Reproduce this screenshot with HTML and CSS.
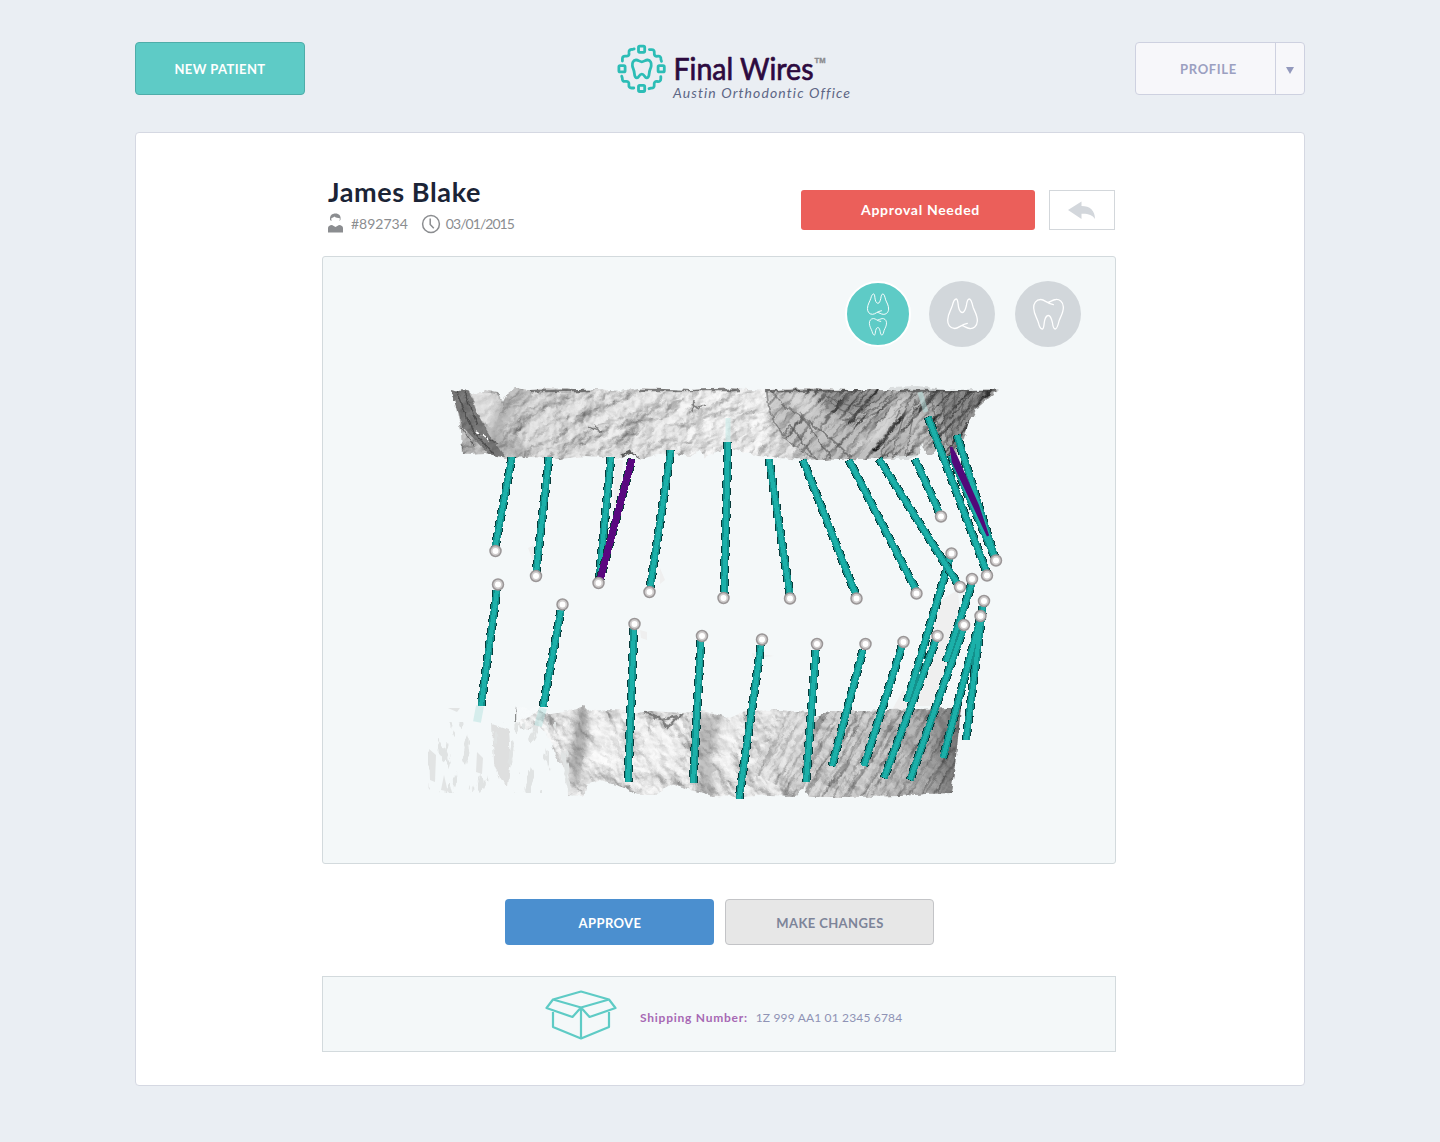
FILE: index.html
```html
<!DOCTYPE html>
<html lang="en">
<head>
<meta charset="utf-8">
<title>Final Wires</title>
<link rel="stylesheet" href="styles.css">
</head>
<body>
<div class="page">
  <header class="header">
    <button class="btn btn-new"><span>NEW PATIENT</span></button>
    <svg class="logo" viewBox="610 40 250 64" width="250" height="64">
      <g class="logo-mark" transform="translate(641.6 68.8)">
        <defs>
          <g id="quarter">
            <rect x="-3.1" y="-22.7" width="6.2" height="6.2" rx="1.2"/>
            <path d="M7.8-19.200H10c2 0 2.900 1.200 2.700 3.200-.4 2.600.9 3.800 3.600 3.400 2.200-.2 3.200 1 3 3.200l.6 2"/>
          </g>
        </defs>
        <use href="#quarter"/>
        <use href="#quarter" transform="rotate(90)"/>
        <use href="#quarter" transform="rotate(180)"/>
        <use href="#quarter" transform="rotate(270)"/>
        <path d="M.2-7C-2-7-3.4-9-5.6-8.8-8.4-8.6-9.6-5.8-9.2-3-8.9-.6-7.6 1-7.3 4-7.1 6.6-6.3 9-4.6 9-2.6 9-2.6 5.4.2 5.4S3 9 5 9C6.700 9 7.500 6.600 7.700 4 8 1 9.300-.6 9.600-3 10-5.800 8.800-8.600 6-8.800 3.800-9 2.400-7 .2-7Z"/>
      </g>
      <text class="logo-name" x="673.500" y="80" textLength="140" lengthAdjust="spacingAndGlyphs">Final Wires</text>
      <text class="logo-tm" x="814.500" y="63" textLength="11" lengthAdjust="spacingAndGlyphs">TM</text>
      <text class="logo-sub" x="673" y="98" textLength="177">Austin Orthodontic Office</text>
    </svg>
    <div class="profile">
      <button class="profile-main"><span>PROFILE</span></button>
      <button class="profile-toggle" aria-label="Open menu"><svg width="8" height="7" viewBox="0 0 8 7"><path d="M0 0H8L4 7Z" fill="#9399bd"/></svg></button>
    </div>
  </header>

  <main class="card">
    <section class="patient">
      <div class="patient-info">
        <h1>James Blake</h1>
        <div class="meta">
          <svg width="17" height="20" viewBox="0 0 17 20">
            <path fill="#8b8d90" d="M1 19.500V15c0-2 1.600-2.600 4-3l3.500 2 3.500-2c2.400.4 4 1 4 3v4.500Z"/>
            <path fill="#8b8d90" d="M3 6.500C2.600 2.500 5 .5 8.500.5S14 2.800 13.500 6.500L12.700 8H4Z"/>
            <path fill="#fff" d="M4.300 5.200C6 5 6.600 4 7.200 3.600 8.500 5 11 5.200 12.800 5.200 13 9 11 12.500 8.500 12.500S4.100 9 4.300 5.200Z"/>
          </svg>
          <span class="meta-id">#892734</span>
          <svg class="clock" width="20" height="20" viewBox="0 0 20 20" fill="none" stroke="#8b8d90" stroke-width="1.500"><circle cx="10" cy="10" r="8.400"/><path d="M9.200 4.500V10.500L12.800 14.300"/></svg>
          <span class="meta-date">03/01/2015</span>
        </div>
      </div>
      <div class="patient-actions">
        <div class="status"><span>Approval Needed</span></div>
        <button class="back" aria-label="Back"><svg width="28" height="20" viewBox="0 0 28 20"><path fill="#d3d7dc" d="M0 10 13.500 1.500V6C22 6 27 10.500 27 19 24.500 15 20 13.500 13.500 13.800V19Z"/></svg></button>
      </div>
    </section>

    <section class="viewer">
      <svg class="model" viewBox="323 257 792 606" width="792" height="606">
        <defs>
          <filter id="bumps" x="0" y="0" width="100%" height="100%" color-interpolation-filters="sRGB">
            <feTurbulence type="fractalNoise" baseFrequency=".035 .05" numOctaves="4" seed="7"/>
            <feColorMatrix values="0 0 0 0 0 0 0 0 0 0 0 0 0 0 0 1 0 0 0 0"/>
            <feDiffuseLighting surfaceScale="5" diffuseConstant="1.050" lighting-color="#ededed"><feDistantLight azimuth="235" elevation="62"/></feDiffuseLighting>
            <feGaussianBlur stdDeviation=".6"/>
          </filter>
          <filter id="grooves" x="0" y="0" width="100%" height="100%" color-interpolation-filters="sRGB">
            <feTurbulence type="fractalNoise" baseFrequency=".02 .16" numOctaves="4" seed="12"/>
            <feColorMatrix values="0 0 0 0 0 0 0 0 0 0 0 0 0 0 0 1 0 0 0 0"/>
            <feDiffuseLighting surfaceScale="5" diffuseConstant="1" lighting-color="#cecece"><feDistantLight azimuth="250" elevation="60"/></feDiffuseLighting>
            <feGaussianBlur stdDeviation=".4"/>
          </filter>
          <filter id="ragged" x="-2%" y="-5%" width="104%" height="110%">
            <feTurbulence type="fractalNoise" baseFrequency=".16" numOctaves="2" seed="3" result="n"/>
            <feDisplacementMap in="SourceGraphic" in2="n" scale="5" xChannelSelector="R" yChannelSelector="G"/>
          </filter>
          <filter id="soft"><feGaussianBlur stdDeviation="3"/></filter>
          <filter id="flakes" x="0" y="0" width="100%" height="100%" color-interpolation-filters="sRGB">
            <feTurbulence type="fractalNoise" baseFrequency=".11 .035" numOctaves="4" seed="21"/>
            <feColorMatrix values="0 0 0 0 .88 0 0 0 0 .89 0 0 0 0 .89 22 0 0 0 -13.600"/>
          </filter>
          <linearGradient id="upperTone" x1="452" x2="998" y1="0" y2="0" gradientUnits="userSpaceOnUse">
            <stop offset="0" stop-color="#666" stop-opacity=".4"/><stop offset=".1" stop-color="#888" stop-opacity=".2"/>
            <stop offset=".3" stop-color="#aaa" stop-opacity=".1"/><stop offset=".45" stop-color="#fff" stop-opacity=".3"/>
            <stop offset=".57" stop-color="#fff" stop-opacity=".25"/><stop offset=".62" stop-color="#777" stop-opacity=".1"/>
            <stop offset="1" stop-color="#555" stop-opacity=".25"/>
          </linearGradient>
          <linearGradient id="lowerTone" x1="560" x2="962" y1="0" y2="0" gradientUnits="userSpaceOnUse">
            <stop offset="0" stop-color="#fff" stop-opacity=".25"/><stop offset=".5" stop-color="#eee" stop-opacity=".2"/>
            <stop offset=".75" stop-color="#bbb" stop-opacity=".2"/><stop offset=".9" stop-color="#777" stop-opacity=".4"/><stop offset="1" stop-color="#333" stop-opacity=".65"/>
          </linearGradient>
          <clipPath id="upperArch">
            <path d="M452 390 459 392 463 389 470 391 476 396 484 389 498 392 503 402 507 394 515 388 530 390 548 388 575 390 598 389 620 391 640 388 690 390 730 388 768 390 806 388 850 390 888 390 890 387 918 386 945 390 999 389 988 398 977 409 968 424 964 440 958 444 955 458 945 457 940 445 932 455 926 455 921 442 918 455 910 459 860 459 820 460 790 459 758 456 738 450 728 446 716 452 705 458 700 450 690 457 670 452 640 459 630 453 620 458 585 456 560 459 530 457 505 458 485 453 462 454 461 430Z"/>
          </clipPath>
          <clipPath id="lowerArch">
            <path d="M516 706 530 710 538 706 545 715 570 711 584 706 590 711 618 710 632 714 650 711 682 713 700 711 714 713 730 718 745 711 778 710 806 712 816 717 830 711 860 711 950 708 961 706 958 738 955 765 951 793 925 794 900 796 850 797 808 797 804 786 796 796 770 795 745 797 712 796 700 792 690 790 672 783 655 795 640 795 625 788 600 780 588 783 584 796 568 795 567 770 556 758 550 738 538 725 522 730 514 720Z"/>
          </clipPath>
          <clipPath id="palate"><path d="M766 390H999L976 409 964 440 955 458 925 456 918 455 820 462C790 445 766 430 766 390Z"/></clipPath>
          <path id="upperRods" d="M512 457 495 548M549 457 536 573M611 457 599 580M671 450 650 588M728 442 724 595M769 459 790 595M803 460 856 595M849 460 916 590M879 459 959 586M915 459 940 514M957 435 995 558M951 455 995 558M928 417 987 573"/>
          <path id="lowerRods" d="M950 558 907 702M972 583 946 662M497 590 481 706M561 610 543 707M634 628 628 782M701 640 693 783M761 645 739 799M816 650 806 782M863 650 832 766M902 646 864 766M936 640 884 778M963 630 910 780M983 606 966 740M980 620 943 758"/>
          <path id="purpleRod" d="M632 459 600 580"/>
          <path id="balls" d="M495.500 551h0M536 576h0M598.500 583h0M649.500 592h0M723.500 598h0M790 598.500h0M856.500 598.500h0M916.500 593.500h0M960 587h0M941 516.500h0M987 575.500h0M996 560.500h0M498 584.500h0M562.500 604.500h0M634.500 624h0M702 636h0M762 639.500h0M817 644h0M865.500 644h0M903.500 642h0M937.500 636h0M964 625h0M980.500 616h0M984 601h0M972 579h0M951.500 553.500h0"/>
        </defs>

        <!-- faint scan residue behind the rods -->
        <g fill="#efefef">
          <path d="M937 602 958 590 962 640 938 706 915 706Z M892 710 903 690 915 710Z"/>
          <path d="M615 460h8l-3 40-6 8Z M528 548l6-3v18Z M660 568l5 12-5 4Z M752 653l22 3-21 2Z M640 630l7 2v8l-6-2Z M834 550l8-4-4 15Z"/>
        </g>

        <!-- upper arch -->
        <g filter="url(#ragged)"><g clip-path="url(#upperArch)">
          <g transform="rotate(-25 600 420)"><rect x="420" y="230" width="430" height="400" filter="url(#bumps)"/></g>
          <g clip-path="url(#palate)">
            <g transform="rotate(-48 870 420)"><rect x="740" y="280" width="280" height="280" filter="url(#grooves)"/></g>
            <path d="M764 385 810 395 868 440 880 462H800L768 430Z" fill="#d6d6d6" opacity=".45"/>
            <path d="M770 388C786 416 806 412 852 458M767 392C769 428 793 450 818 460M800 412 818 440 832 458M780 440 790 425 812 455" fill="none" stroke="#555" stroke-width="1.600" opacity=".65"/>
            <g filter="url(#soft)">
              <path d="M905 395 872 430 850 452 880 440 908 400Z" fill="#fff" opacity=".7"/>
              <path d="M786 392 815 396 812 418 792 408Z" fill="#fff" opacity=".5"/>
              <path d="M820 390H890C880 404 850 420 826 412Z M930 388H996L966 424 954 450Z" fill="#444" opacity=".35"/>
              <path d="M912 415 925 415 930 455 905 455Z" fill="#fff" opacity=".4"/>
            </g>
            <path d="M825 394Q860 418 882 396M830 402Q858 428 890 396M842 420Q870 424 898 395M930 392 942 448M942 390 948 446M955 390 952 440M966 392 957 432M975 391 961 425M985 391 966 418M916 400 906 455M908 402 892 455M900 410 880 455" fill="none" stroke="#444" stroke-width="1.300" opacity=".5"/>
          </g>
          <rect x="440" y="380" width="570" height="90" fill="url(#upperTone)"/>
          <path d="M472 391 498 394 503 408 492 428 478 418Z" fill="#efefef" opacity=".65"/>
          <path d="M503 393 530 390 500 432 530 456H492L486 436Z" fill="#777" opacity=".35" filter="url(#soft)"/>
          <path d="M450 388 469 390C476 415 487 432 505 457L490 456 462 426Z" fill="#555" opacity=".65"/>
          <path d="M457 392 472 430 494 455M464 392 478 426M476 432 498 444M462 428 474 446" fill="none" stroke="#333" stroke-width="1.300" opacity=".6"/>
          <path d="M477 431 484 436 489 440" fill="none" stroke="#fff" stroke-width="2" stroke-dasharray="4 2"/>
          <path d="M587 427 602 432M595 424 600 433M690 404 700 409M694 400 692 412M706 405 698 407" fill="none" stroke="#444" stroke-width="1.500" opacity=".6"/>
          <path d="M622 456 630 452 638 459" fill="none" stroke="#333" stroke-width="3" opacity=".75"/>
          <path d="M530 391H590M640 390H740M765 391H860M900 391H996" fill="none" stroke="#444" stroke-width="2.500" opacity=".65"/>
        </g></g>

        <!-- lower arch -->
        <g filter="url(#ragged)">
          <g clip-path="url(#lowerArch)">
            <g transform="rotate(60 730 750)"><rect x="600" y="500" width="330" height="480" filter="url(#bumps)"/></g>
            <g transform="rotate(-58 870 750)" opacity=".5"><rect x="790" y="660" width="180" height="200" filter="url(#grooves)"/></g>
            <rect x="505" y="700" width="465" height="105" fill="url(#lowerTone)"/>
            <g filter="url(#soft)">
              <path d="M578 706 589 706 588 740 582 770 572 795 568 760Z" fill="#555" opacity=".4"/>
              <path d="M692 712 722 716 712 760 716 798 700 796Z" fill="#666" opacity=".35"/>
              <path d="M590 722 620 725 628 770 592 762Z M722 720 742 735 728 780 718 760Z M640 730 680 740 670 785 646 770Z" fill="#fff" opacity=".5"/>
              <path d="M790 712 820 715 770 795 750 790Z" fill="#fff" opacity=".3"/>
            </g>
            <path d="M515 706 515 736M644 712 662 720 668 727 682 713M662 720 678 716" fill="none" stroke="#444" stroke-width="2.500" opacity=".6"/>
          </g>
          <path d="M492 724 509 730 511 758 508 786 500 778 494 762Z" fill="#dedfdf"/>
        </g>
        <rect x="428" y="722" width="142" height="71" filter="url(#flakes)"/>
        <path d="M429 749 436 755 435 782 430 780Z M477 752l6 6-1 16-6-2Z M441 790l3-15 3 13 4 4Z M448 708h12l-3 4Z" fill="#e2e4e4"/>

        <!-- wires and their end points -->
        <use href="#lowerRods" class="rod rod-edge" x="-1"/><use href="#lowerRods" class="rod rod-edge rod-edge-far" x="1"/><use href="#lowerRods" class="rod rod-body"/><use href="#lowerRods" class="rod rod-shine"/>
        <use href="#upperRods" class="rod rod-edge" x="-1"/><use href="#upperRods" class="rod rod-edge rod-edge-far" x="1"/><use href="#upperRods" class="rod rod-body"/><use href="#upperRods" class="rod rod-shine"/>
        <use href="#purpleRod" class="rod rod-edge" x="-1"/><use href="#purpleRod" class="rod rod-edge rod-edge-far" x="1"/><use href="#purpleRod" class="rod rod-purple"/>
        <path d="M951 447 953 462 974 506 988 536 978 506 956 456Z" fill="#520a7a" stroke="#520a7a" stroke-width="2.500"/>
        <path d="M728 418V442M920 392 926 412" stroke="#bfe9e6" stroke-width="5" opacity=".5"/>
        <path d="M480 706 477 722M543 708 538 726" stroke="#a8dedb" stroke-width="8" opacity=".4"/>
        <use href="#balls" class="ball ball-rim"/><use href="#balls" class="ball ball-mid"/><use href="#balls" class="ball ball-core"/>
      </svg>
      <div class="views">
        <svg width="0" height="0" class="sprite"><defs>
          <path id="tooth" d="M21 6.200C15 5.500 12 1 8 1C3 1 .5 5 .7 9.500C1 16 4 19 5.500 24C6.500 28 8 30.500 9.500 30.500C11.500 30.500 11 26 12 22C13 18 14.500 17 16 17C18 17 19 20 20 24C20.500 28 21.500 30.500 23 30.500C25 30.500 26 26 27 22C28.500 18 31.500 14 31.300 8.500C31 3 27 .7 23.500 1C20 1.200 18 3.500 15.500 3.800"/>
        </defs></svg>
        <button class="view view-active" aria-label="Both arches"><svg width="62" height="62" viewBox="0 0 62 62"><use href="#tooth" transform="translate(20 32) scale(.69 -.69)" stroke-width="1.400"/><use href="#tooth" transform="translate(22 35) scale(.56)" stroke-width="1.600"/></svg></button>
        <button class="view" aria-label="Upper arch"><svg width="66" height="66" viewBox="0 0 66 66"><use href="#tooth" transform="translate(18 48.500) scale(.97 -1)" stroke-width="1.300"/></svg></button>
        <button class="view" aria-label="Lower arch"><svg width="66" height="66" viewBox="0 0 66 66"><use href="#tooth" transform="translate(18 17.500) scale(.97 1)" stroke-width="1.300"/></svg></button>
      </div>
    </section>

    <section class="decision">
      <button class="btn btn-approve"><span>APPROVE</span></button>
      <button class="btn btn-changes"><span>MAKE CHANGES</span></button>
    </section>

    <section class="shipping">
      <svg width="72" height="50" viewBox="0 0 72 50" fill="none" stroke="#5ecbc5" stroke-width="2.200" stroke-linejoin="round"><path d="M36 1.500 64 9.500 36 17.500 8 9.500ZM8 9.500 1.500 18 27.500 27 36 17.500 44.500 27 70.500 18 64 9.500M8 20.500V37L36 48.500 64 37V20.500M36 17.500V48.500"/></svg>
      <span class="ship-label">Shipping Number:</span>
      <span class="ship-number">1Z 999 AA1 01 2345 6784</span>
    </section>
  </main>
</div>
</body>
</html>
```
FILE: styles.css
```css
* { box-sizing: border-box; }
body { margin: 0; background: #eaeef3; font-family: Lato, "Liberation Sans", sans-serif; }
button { font: inherit; padding: 0; margin: 0; cursor: pointer; }
svg { display: block; flex: none; }
.page { width: 1170px; margin: 0 auto; padding-top: 42px; min-height: 1142px; }

.header { display: grid; grid-template-columns: 170px 1fr 170px; align-items: start; height: 90px; }
.btn { display: flex; align-items: center; justify-content: center; border-radius: 4px; font-weight: 700; font-size: 13px; letter-spacing: .4px; }
.btn-new { height: 53px; background: #5ecbc6; border: 1px solid #4fada9; color: #fff; padding-top: 1px; }
.logo { margin: -2px 0 0 305px; }
.logo-mark { fill: none; stroke: #2cbdb6; stroke-width: 2.8; stroke-linecap: round; stroke-linejoin: round; }
.logo-name { font: 400 30px Lato, sans-serif; fill: #2d0a3f; stroke: #2d0a3f; stroke-width: .7px; stroke-linejoin: round; }
.logo-tm { font: 700 7px "Liberation Sans", sans-serif; fill: #8b8b8f; stroke: #8b8b8f; stroke-width: .3px; }
.logo-sub { font: italic 400 14px Lato, sans-serif; fill: #5d6685; font-variant-ligatures: none; }
.profile { display: grid; grid-template-columns: 1fr 29px; height: 53px; background: #f7f7fa; border: 1px solid #ced1e0; border-radius: 4px; }
.profile button { display: flex; align-items: center; justify-content: center; background: none; border: 0; }
.profile .profile-main { color: #9ba0c1; font-size: 13px; font-weight: 700; letter-spacing: .65px; padding: 1px 0 0 6px; }
.profile .profile-toggle { border-left: 1px solid #ced1e0; padding-top: 3px; }

.card { height: 954px; background: #fff; border: 1px solid #d5d8e2; border-radius: 4px; padding: 0 188px 0 186px; display: flex; flex-direction: column; }
.patient { display: flex; justify-content: space-between; height: 123px; padding: 43px 1px 0 6px; }
h1 { margin: -1px 0 1px; font-size: 27px; line-height: 34px; font-weight: 700; color: #1b2436; letter-spacing: .6px; }
.meta { display: flex; align-items: center; height: 22px; margin-top: 4px; color: #8b8d90; font-size: 14px; }
.meta span { margin-top: -1px; }
.meta svg:first-child { margin-left: -1px; margin-top: -3px; }
.meta .meta-id { margin-left: 7px; }
.clock { margin: 0 5px 0 13px; }
.meta-date { letter-spacing: -.95px; }
.patient-actions { display: flex; gap: 14px; padding-top: 14px; }
.status { width: 234px; height: 40px; display: flex; align-items: center; justify-content: center; padding: 0 0 1px 5px; background: #eb5f5a; border-radius: 3px; color: #fff; font-size: 14px; font-weight: 700; letter-spacing: .7px; }
.back { width: 66px; height: 40px; background: #fff; border: 1px solid #d3d7db; display: flex; align-items: center; justify-content: center; }

.viewer { position: relative; height: 608px; border: 1px solid #d3dadd; border-radius: 3px; background: #f4f8f9; flex: none; }
.views { position: absolute; top: 24px; right: 34px; display: flex; align-items: center; gap: 20px; }
.sprite { position: absolute; }
.view { width: 66px; height: 66px; border: 0; border-radius: 50%; background: #d2d7db; }
.view-active { border: 2px solid #fff; background: #5ecbc6; margin-right: -2px; }
.view svg { fill: none; stroke: #fff; stroke-linecap: round; }

.rod { fill: none; shape-rendering: crispEdges; }
.rod-edge { stroke: #073b3a; stroke-width: 7px; stroke-dasharray: 7 6; }
.rod-edge-far { stroke-dashoffset: 6.5px; }
.rod-body { stroke: #13918c; stroke-width: 7px; }
.rod-shine { stroke: #1bb0a9; stroke-width: 4px; }
.rod-purple { stroke: #5a0880; stroke-width: 7px; }
.ball { fill: none; stroke-linecap: round; }
.ball-rim { stroke: #9a9697; stroke-width: 12.500px; }
.ball-mid { stroke: #cfcccc; stroke-width: 9.500px; }
.ball-core { stroke: #fff; stroke-width: 6px; }

.decision { display: flex; justify-content: center; gap: 11px; padding: 35px 0 31px; }
.decision .btn { width: 209px; height: 46px; padding: 2px 0 0 2px; }
.btn-approve { background: #4b8fcf; border: 0; color: #fff; }
.btn-changes { background: #e7e7e7; border: 1px solid #c3c4c7; color: #7d8499; }

.shipping { display: flex; align-items: center; height: 76px; padding: 2px 0 0 221.5px; border: 1px solid #d3dadd; background: #f4f8f9; font-size: 12px; flex: none; }
.ship-label { margin: 5px 0 0 23.5px; font-weight: 700; color: #a768b4; letter-spacing: .75px; }
.ship-number { margin: 5px 0 0 8px; color: #8f93b5; letter-spacing: .16px; }
```
